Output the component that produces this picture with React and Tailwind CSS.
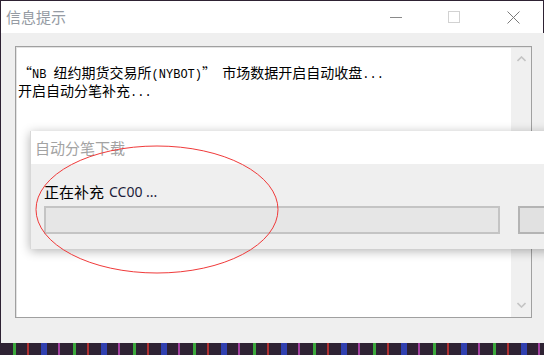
import React from "react";

const cjk = { fontFamily: '"Noto Sans CJK SC", "Noto Sans", sans-serif' };

function Mono({ children }) {
  return (
    <span className="font-['Liberation_Mono',monospace] text-[12px] leading-[12px] align-baseline">{children}</span>
  );
}

export default function App() {
  return (
    <div className="w-[544px] h-[355px] overflow-hidden bg-[#2e2233] relative font-['Noto_Sans_CJK_SC','Noto_Sans',sans-serif]">
      {/* desktop noise strip */}
      <div className="absolute left-0 right-0 bottom-0 h-[12px] bg-[repeating-linear-gradient(90deg,#2e2233_0px,#2e2233_13px,#3ba83b_13px,#3ba83b_16px,#2e2233_16px,#2e2233_27px,#b03030_27px,#b03030_29px,#2e2233_29px,#2e2233_41px,#3040b0_41px,#3040b0_47px,#2e2233_47px,#2e2233_58px,#a040a0_58px,#a040a0_60px)]" />
      {/* main window */}
      <div className="absolute left-[1px] top-[1px] w-[543px] h-[342px] flex flex-col">
        {/* title bar */}
        <div className="h-[32px] w-[542px] bg-white flex items-center shrink-0">
          <span className="ml-[5px] text-[15px] leading-[20px] text-[#959ba3] -mt-[1px]">信息提示</span>
          <div className="ml-auto flex items-center h-full">
            <div className="w-[12px] h-[1px] bg-[#8a8a8a] mr-[46px]" />
            <div className="w-[12px] h-[12px] border border-[#d2d2d2] mr-[47px]" />
            <svg width="13" height="13" viewBox="0 0 13 13" className="mr-[23px]">
              <path d="M0.5 0.5L12.5 12.5M12.5 0.5L0.5 12.5" stroke="#7a7a7a" strokeWidth="1" />
            </svg>
          </div>
        </div>
        {/* body */}
        <div className="flex-1 bg-[#efefef] w-[543px] pt-[13px] pl-[14px]">
          <div className="w-[517px] h-[272px] border border-[#a0a0a0] bg-white">
            <div className="w-full h-full border border-[#e3e3e3] border-r-0 border-b-0 flex">
              <div className="flex-1 pt-[15px] pl-[1px] text-[14px] leading-[18px] text-black" style={cjk}>
                <div className="whitespace-pre h-[18px] leading-[18px]">
                  “<Mono>NB </Mono>纽约期货交易所<Mono>(NYBOT)</Mono>”  市场数据开启自动收盘<Mono>...</Mono>
                </div>
                <div className="whitespace-pre h-[18px] leading-[18px]">
                  开启自动分笔补充<Mono>...</Mono>
                </div>
              </div>
              <div className="w-[20px] bg-[#f0f0f0] flex flex-col items-center justify-between pt-[8px] pb-[9px]">
                <svg width="9" height="6" viewBox="0 0 9 6">
                  <path d="M0.5 5L4.5 1L8.5 5" stroke="#c4c4c4" strokeWidth="1.6" fill="none" />
                </svg>
                <svg width="9" height="6" viewBox="0 0 9 6">
                  <path d="M0.5 1L4.5 5L8.5 1" stroke="#c4c4c4" strokeWidth="1.6" fill="none" />
                </svg>
              </div>
            </div>
          </div>
        </div>
      </div>

      {/* popup window */}
      <div className="absolute left-[30px] top-[131px] w-[540px] h-[118px] flex flex-col shadow-[0_2px_10px_rgba(0,0,0,0.3)] border-l border-[#d8d8d8]">
        <div className="h-[33px] bg-white flex items-center pl-[4px]">
          <span className="text-[15px] leading-[20px] text-[#a3a3a3]">自动分笔下载</span>
        </div>
        <div className="flex-1 bg-[#efefef] pl-[13px] pt-[18px]">
          <div className="h-[20px] flex items-center text-[15px] leading-[20px]">
            <span className="text-black">正在补充</span>
            <span className="ml-[5px] text-[#1c1c3a] font-['Noto_Sans',sans-serif] text-[14px]">CC00 ...</span>
          </div>
          <div className="mt-[4px] flex">
            <div className="shrink-0 w-[456px] h-[28px] border-2 border-[#c4c4c4] bg-[#e6e6e6]" />
            <div className="shrink-0 ml-[18px] w-[60px] h-[28px] border-2 border-[#b4b4b4] bg-[#e1e1e1]" />
          </div>
        </div>
      </div>

      {/* red annotation ellipse */}
      <svg className="absolute left-0 top-0 pointer-events-none" width="544" height="355">
        <ellipse cx="157" cy="209.5" rx="121" ry="63.5" fill="none" stroke="#f03a3a" strokeWidth="1" />
      </svg>
    </div>
  );
}
